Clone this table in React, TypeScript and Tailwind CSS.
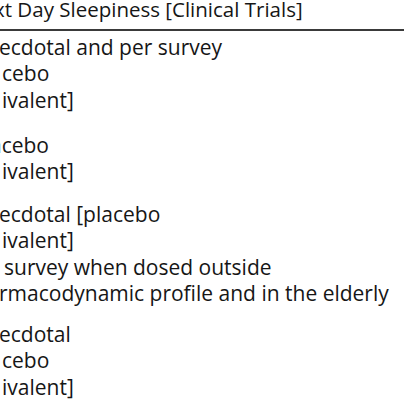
const rows: { gap: string; lines: { text: string; cls: string }[] }[] = [
  {
    gap: "mt-[3px]",
    lines: [
      { text: "ecdotal and per survey", cls: "-ml-[1px]" },
      { text: "cebo", cls: "pl-[2px]" },
      { text: "ivalent]", cls: "pl-[2px]" },
    ],
  },
  {
    gap: "mt-[18.5px]",
    lines: [
      { text: "acebo", cls: "-ml-[10px]" },
      { text: "ivalent]", cls: "pl-[2px]" },
    ],
  },
  {
    gap: "mt-[16px]",
    lines: [
      { text: "ecdotal [placebo", cls: "-ml-[1px]" },
      { text: "ivalent]", cls: "pl-[2px]" },
      { text: "survey when dosed outside", cls: "pl-[4px]" },
      { text: "rmacodynamic profile and in the elderly", cls: "-ml-[1px]" },
    ],
  },
  {
    gap: "mt-[14px]",
    lines: [
      { text: "ecdotal", cls: "-ml-[1px]" },
      { text: "cebo", cls: "pl-[2px]" },
      { text: "ivalent]", cls: "pl-[2px]" },
    ],
  },
];

export default function App() {
  return (
    <div className="w-[404px] h-[404px] overflow-hidden bg-white text-[#161616] font-['Open_Sans',sans-serif] text-[21px] leading-[26.5px]">
      <div className="-mt-[3.7px] -ml-[6px] whitespace-nowrap text-[20.5px]">xt Day Sleepiness [Clinical Trials]</div>
      <div className="mt-[6.2px] h-[1.5px] bg-[#3a3a3a]" />
      {rows.map((row, i) => (
        <div key={i} className={`flex flex-col ${row.gap}`}>
          {row.lines.map((l, j) => (
            <div key={j} className={`whitespace-nowrap ${l.cls}`}>
              {l.text}
            </div>
          ))}
        </div>
      ))}
    </div>
  );
}
